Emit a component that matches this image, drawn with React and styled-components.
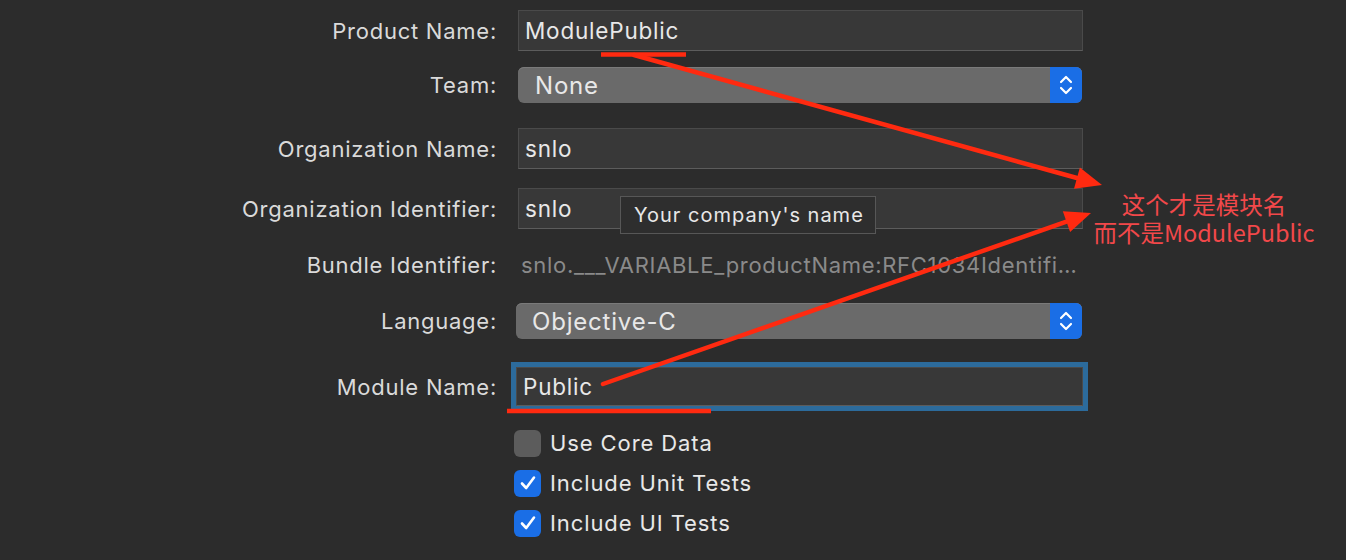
import React from "react";
import styled, { createGlobalStyle } from "styled-components";

const colors = {
  page: "#2c2c2c",
  field: "#383838",
  fieldEdge: "#4a4a4a",
  popup: "#6a6a6a",
  blue: "#1a6ee6",
  ring: "#2c6b9c",
  label: "#dadada",
  text: "#e8e8e8",
  muted: "#8a8a8a",
  red: "#ff2a10",
  redText: "#f2484a",
};

const GlobalStyle = createGlobalStyle`
  body {
    margin: 0;
    background: ${colors.page};
    font-family: Inter, "Noto Sans", "Noto Sans CJK SC", sans-serif;
  }
`;

const Page = styled.div`
  position: relative;
  width: 1346px;
  height: 560px;
  overflow: hidden;
  background: ${colors.page};
  padding-top: 10px;
  box-sizing: border-box;
`;

const Row = styled.div`
  display: flex;
  align-items: center;
  height: ${(p) => p.$h}px;
  margin-top: ${(p) => p.$top || 0}px;
`;

const Label = styled.div`
  width: 497px;
  text-align: right;
  font-size: 22px;
  color: ${colors.label};
  letter-spacing: 0.75px;
`;

const Control = styled.div`
  position: relative;
  margin-left: ${(p) => p.$left || 21}px;
  width: ${(p) => p.$w || 565}px;
  height: 100%;
  display: flex;
  align-items: center;
`;

const Field = styled.div`
  width: 100%;
  height: 100%;
  box-sizing: border-box;
  background: ${colors.field};
  border: 1px solid ${colors.fieldEdge};
  border-bottom-color: #5c5c5c;
  padding: 0 6px;
  display: flex;
  align-items: center;
  font-size: 22.5px;
  letter-spacing: 0.8px;
  color: ${colors.text};
  box-shadow: ${(p) => (p.$focused ? `0 0 0 5px ${colors.ring}` : "none")};
`;

const Popup = styled.div`
  width: 100%;
  height: 100%;
  border-radius: 6px;
  background: ${colors.popup};
  display: flex;
  align-items: center;
  overflow: hidden;
  font-size: 24px;
  letter-spacing: 0.8px;
  color: ${colors.text};
  box-shadow: inset 0 1px 0 #7a7a7a;
`;

const PopupText = styled.span`
  flex: 1;
  padding-left: ${(p) => p.$pad || 17}px;
`;

const Stepper = styled.div`
  width: 32px;
  height: 100%;
  background: ${colors.blue};
  display: flex;
  align-items: center;
  justify-content: center;
`;

const Plain = styled.div`
  font-size: 22px;
  letter-spacing: 0.7px;
  color: ${colors.muted};
  padding-left: 3px;
  width: 556px;
  white-space: nowrap;
  overflow: hidden;
  text-overflow: ellipsis;
`;

const Tooltip = styled.div`
  position: absolute;
  left: 102px;
  top: 8px;
  height: 38px;
  width: 256px;
  padding-left: 13px;
  box-sizing: border-box;
  background: #2e2e2e;
  border: 1px solid #575757;
  display: flex;
  align-items: center;
  font-size: 20px;
  letter-spacing: 1px;
  color: ${colors.text};
  white-space: nowrap;
`;

const CheckRow = styled.div`
  display: flex;
  align-items: center;
  gap: 9px;
  height: 28px;
  margin-left: 514px;
  margin-top: ${(p) => p.$top}px;
  font-size: 22px;
  letter-spacing: 0.9px;
  color: ${colors.text};
`;

const Box = styled.div`
  width: 27px;
  height: 27px;
  border-radius: 6px;
  background: ${(p) => (p.$checked ? colors.blue : "#5c5c5c")};
  display: flex;
  align-items: center;
  justify-content: center;
`;

const Overlay = styled.svg`
  position: absolute;
  left: 0;
  top: 0;
  pointer-events: none;
`;

const Note = styled.div`
  position: absolute;
  left: 1080px;
  top: 190px;
  width: 248px;
  display: flex;
  flex-direction: column;
  align-items: center;
  font-family: "Noto Sans CJK SC", Inter, sans-serif;
  font-size: 23.5px;
  color: ${colors.redText};
  pointer-events: none;
`;

const NoteLine = styled.div`
  height: 28px;
  line-height: 28px;
  white-space: nowrap;
`;

const Chevrons = () => (
  <svg width="16" height="26" viewBox="0 0 16 26">
    <path d="M3 10 L8 5 L13 10" fill="none" stroke="#fff" strokeWidth="2.2" strokeLinecap="round" strokeLinejoin="round" />
    <path d="M3 16 L8 21 L13 16" fill="none" stroke="#fff" strokeWidth="2.2" strokeLinecap="round" strokeLinejoin="round" />
  </svg>
);

const Check = () => (
  <svg width="20" height="20" viewBox="0 0 20 20">
    <path d="M4 10.5 L8.2 15 L16 4.5" fill="none" stroke="#fff" strokeWidth="2.6" strokeLinecap="round" strokeLinejoin="round" />
  </svg>
);

const Arrow = ({ x1, y1, x2, y2 }) => {
  const a = Math.atan2(y2 - y1, x2 - x1);
  const len = 26;
  const half = 11;
  const bx = x2 - len * Math.cos(a);
  const by = y2 - len * Math.sin(a);
  const px = -Math.sin(a) * half;
  const py = Math.cos(a) * half;
  return (
    <g>
      <line x1={x1} y1={y1} x2={bx} y2={by} stroke={colors.red} strokeWidth="4.5" strokeLinecap="round" />
      <polygon points={`${x2},${y2} ${bx + px},${by + py} ${bx - px},${by - py}`} fill={colors.red} />
    </g>
  );
};

export default function App() {
  return (
    <>
      <GlobalStyle />
      <Page>
        <Row $h={41}>
          <Label>Product Name:</Label>
          <Control>
            <Field>ModulePublic</Field>
          </Control>
        </Row>
        <Row $h={36} $top={16}>
          <Label>Team:</Label>
          <Control $w={564}>
            <Popup>
              <PopupText>None</PopupText>
              <Stepper>
                <Chevrons />
              </Stepper>
            </Popup>
          </Control>
        </Row>
        <Row $h={41} $top={25}>
          <Label>Organization Name:</Label>
          <Control>
            <Field>snlo</Field>
          </Control>
        </Row>
        <Row $h={41} $top={19}>
          <Label>Organization Identifier:</Label>
          <Control>
            <Field>snlo</Field>
            <Tooltip>Your company's name</Tooltip>
          </Control>
        </Row>
        <Row $h={36} $top={18}>
          <Label>Bundle Identifier:</Label>
          <Control>
            <Plain>snlo.___VARIABLE_productName:RFC1034Identifier</Plain>
          </Control>
        </Row>
        <Row $h={36} $top={20}>
          <Label>Language:</Label>
          <Control $left={19} $w={566}>
            <Popup>
              <PopupText $pad={16}>Objective-C</PopupText>
              <Stepper>
                <Chevrons />
              </Stepper>
            </Popup>
          </Control>
        </Row>
        <Row $h={39} $top={28}>
          <Label>Module Name:</Label>
          <Control $left={19} $w={567}>
            <Field $focused>Public</Field>
          </Control>
        </Row>
        <CheckRow $top={23}>
          <Box />
          Use Core Data
        </CheckRow>
        <CheckRow $top={12}>
          <Box $checked>
            <Check />
          </Box>
          Include Unit Tests
        </CheckRow>
        <CheckRow $top={12}>
          <Box $checked>
            <Check />
          </Box>
          Include UI Tests
        </CheckRow>

        <Overlay width="1346" height="560" viewBox="0 0 1346 560">
          <line x1="601" y1="54.5" x2="686" y2="54.5" stroke={colors.red} strokeWidth="4.5" />
          <line x1="507" y1="411" x2="711" y2="411" stroke={colors.red} strokeWidth="4.5" />
          <Arrow x1={634} y1={55} x2={1102} y2={185} />
          <Arrow x1={603} y1={384} x2={1091} y2={213} />
        </Overlay>
        <Note>
          <NoteLine>这个才是模块名</NoteLine>
          <NoteLine>而不是ModulePublic</NoteLine>
        </Note>
      </Page>
    </>
  );
}
